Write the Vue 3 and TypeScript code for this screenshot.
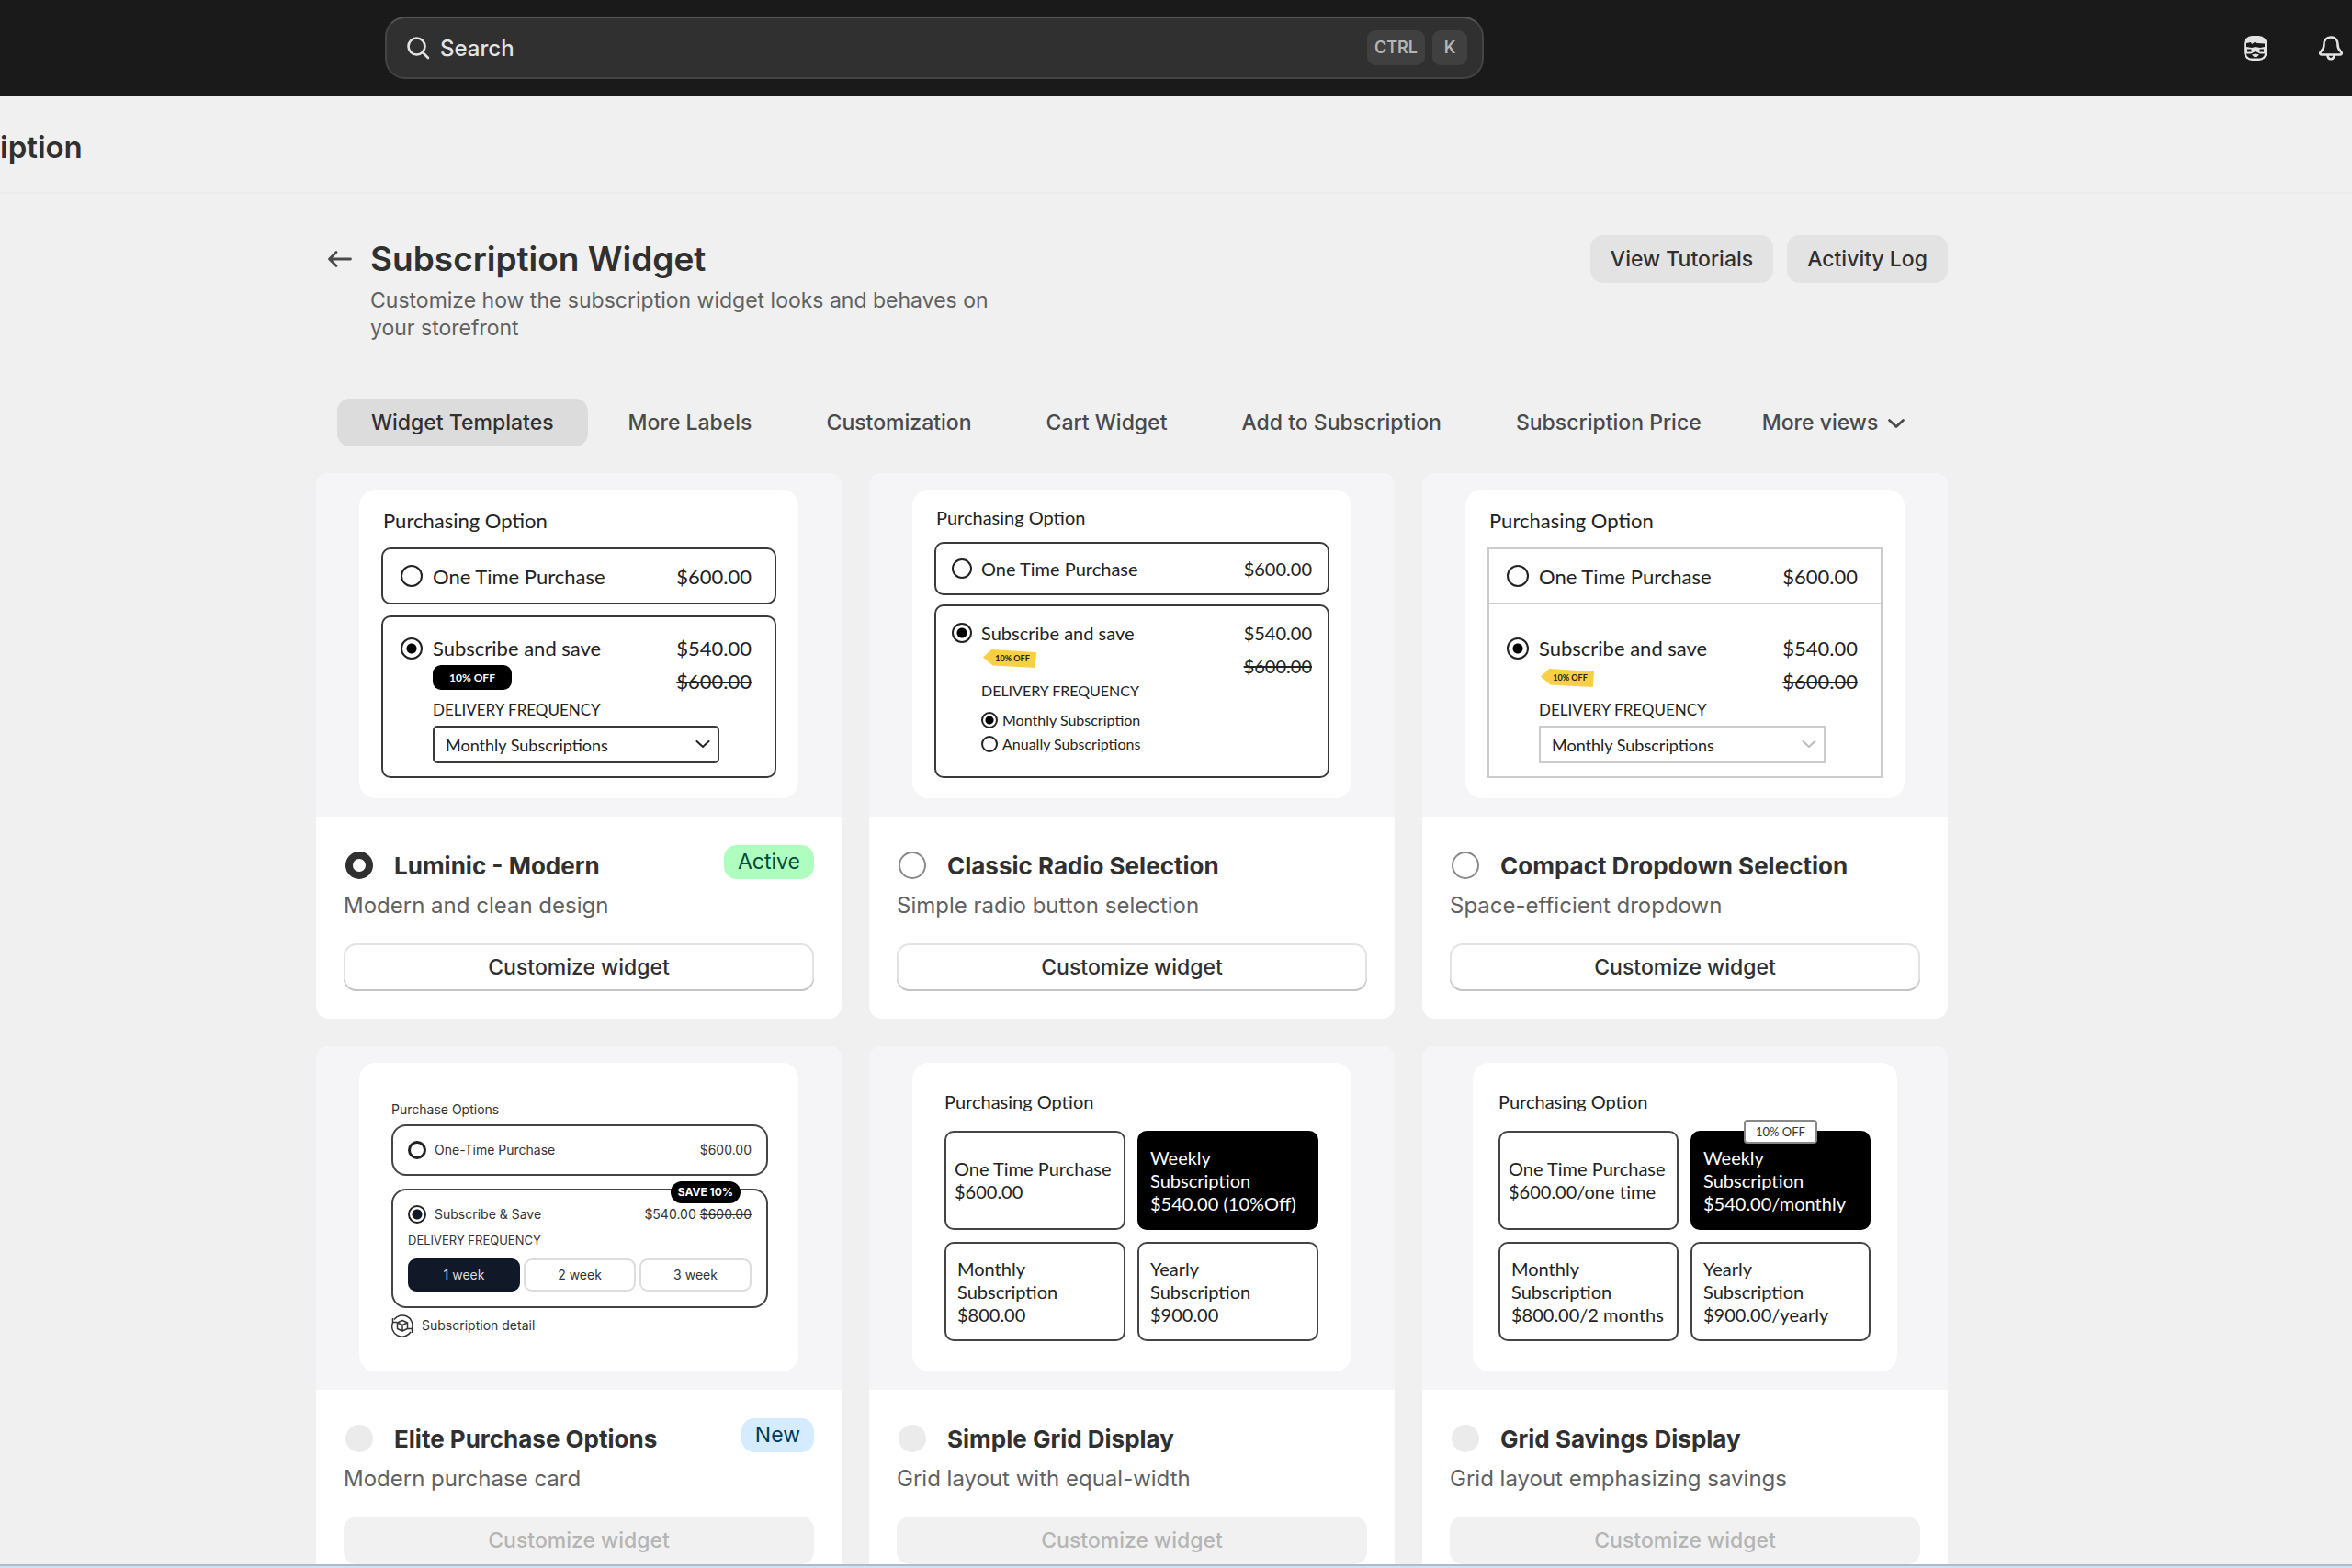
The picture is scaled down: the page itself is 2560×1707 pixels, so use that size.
<script setup lang="ts">
import { ref } from 'vue'

type PreviewKind = 'select' | 'radio' | 'elite' | 'grid'

interface PlanTile {
  lines: string[]
  active?: boolean
  flag?: string
}

interface WidgetTemplate {
  id: string
  name: string
  description: string
  preview: PreviewKind
  variant: string
  badge?: { label: string; tone: string }
  locked?: boolean
  tiles?: PlanTile[]
}

const tabs = [
  'Widget Templates',
  'More Labels',
  'Customization',
  'Cart Widget',
  'Add to Subscription',
  'Subscription Price',
]
const activeTab = ref('Widget Templates')
const selected = ref('luminic')

const templates: WidgetTemplate[] = [
  {
    id: 'luminic',
    name: 'Luminic - Modern',
    description: 'Modern and clean design',
    preview: 'select',
    variant: 'rounded',
    badge: { label: 'Active', tone: 'success' },
  },
  {
    id: 'classic',
    name: 'Classic Radio Selection',
    description: 'Simple radio button selection',
    preview: 'radio',
    variant: 'classic',
  },
  {
    id: 'compact',
    name: 'Compact Dropdown Selection',
    description: 'Space-efficient dropdown',
    preview: 'select',
    variant: 'square',
  },
  {
    id: 'elite',
    name: 'Elite Purchase Options',
    description: 'Modern purchase card',
    preview: 'elite',
    variant: 'week-picker',
    badge: { label: 'New', tone: 'info' },
    locked: true,
  },
  {
    id: 'simple-grid',
    name: 'Simple Grid Display',
    description: 'Grid layout with equal-width',
    preview: 'grid',
    variant: 'simple',
    locked: true,
    tiles: [
      { lines: ['One Time Purchase', '$600.00'] },
      { lines: ['Weekly', 'Subscription', '$540.00 (10%Off)'], active: true },
      { lines: ['Monthly', 'Subscription', '$800.00'] },
      { lines: ['Yearly', 'Subscription', '$900.00'] },
    ],
  },
  {
    id: 'grid-savings',
    name: 'Grid Savings Display',
    description: 'Grid layout emphasizing savings',
    preview: 'grid',
    variant: 'savings',
    locked: true,
    tiles: [
      { lines: ['One Time Purchase', '$600.00/one time'] },
      { lines: ['Weekly', 'Subscription', '$540.00/monthly'], active: true, flag: '10% OFF' },
      { lines: ['Monthly', 'Subscription', '$800.00/2 months'] },
      { lines: ['Yearly', 'Subscription', '$900.00/yearly'] },
    ],
  },
]

const weeks = ['1 week', '2 week', '3 week']
</script>

<template>
  <div class="shell">
    <header class="topbar">
      <label class="search">
        <svg class="search-icon" viewBox="0 0 28 28" fill="none" stroke="currentColor" stroke-width="2.600" stroke-linecap="round">
          <circle cx="12.500" cy="12.500" r="9" />
          <path d="M19 19l6 6" />
        </svg>
        <input type="text" placeholder="Search" aria-label="Search" />
        <kbd>CTRL</kbd>
        <kbd>K</kbd>
      </label>
      <div class="top-actions">
        <button type="button" class="icon-button" aria-label="Assistant">
          <svg viewBox="0 0 28 28">
            <rect x="1.200" y="1" width="25.600" height="27" rx="9" fill="#e3e3e3" />
            <path d="M4 9l5-1 1 2 3-2 3 1 8 .5v3.500l-5 1-5-1-4 1-6-1z" fill="#1a1a1a" />
            <path d="M5 15.500h4.500v3H5zM18.500 15.500H23v3h-4.500z" fill="#1a1a1a" />
            <path d="M4 20.500h5l5-2.500 5 2.500h5c-.5 3.500-3 5-6 5h-8c-3 0-5.500-1.500-6-5z" fill="#1a1a1a" />
            <path d="M10 21.500l4-1 4 1-2.500 2.500h-3z" fill="#e3e3e3" />
          </svg>
        </button>
        <button type="button" class="icon-button" aria-label="Notifications">
          <svg viewBox="0 0 28 28" fill="none" stroke="#e3e3e3" stroke-width="2.600" stroke-linejoin="round">
            <path d="M14 2.500c-5 0-7.500 3.500-7.500 8 0 4-.8 5.500-3.200 7.500-1.800 1.600-1.200 3.500.7 3.500h20c1.900 0 2.500-1.900.7-3.500-2.400-2-3.200-3.500-3.200-7.500 0-4.500-2.500-8-7.500-8z" />
            <path d="M10.500 21.500c0 3 1.300 4.700 3.500 4.700s3.500-1.700 3.500-4.700" />
          </svg>
        </button>
      </div>
    </header>

    <div class="app-title">iption</div>

    <main class="page">
      <section class="page-head">
        <a class="back" href="#" aria-label="Back">
          <svg viewBox="0 0 28 28" fill="none" stroke="#4a4a4a" stroke-width="2.800" stroke-linecap="round" stroke-linejoin="round">
            <path d="M25.500 14H3M10 6.500 2.500 14l7.500 7.500" />
          </svg>
        </a>
        <div class="heading">
          <h1>Subscription Widget</h1>
          <p>Customize how the subscription widget looks and behaves on your storefront</p>
        </div>
        <div class="head-actions">
          <button type="button">View Tutorials</button>
          <button type="button">Activity Log</button>
        </div>
      </section>

      <nav class="tabs">
        <button
          v-for="tab in tabs"
          :key="tab"
          type="button"
          :class="{ active: tab === activeTab }"
          @click="activeTab = tab"
        >
          {{ tab }}
        </button>
        <button type="button" class="more">
          More views
          <svg viewBox="0 0 20 20" fill="none" stroke="currentColor" stroke-width="2.800" stroke-linecap="round" stroke-linejoin="round">
            <path d="M2.500 7.500 10 14.500l7.500-7" />
          </svg>
        </button>
      </nav>

      <section class="cards">
        <article v-for="t in templates" :key="t.id" class="card">
          <div class="preview">
            <div class="mock" :class="[t.preview, t.variant]">
              <h3>{{ t.preview === 'elite' ? 'Purchase Options' : 'Purchasing Option' }}</h3>

              <template v-if="t.preview === 'select' || t.preview === 'radio'">
                <div class="option one-time">
                  <input :id="t.id + '-once'" type="radio" :name="t.id" />
                  <label :for="t.id + '-once'">One Time Purchase</label>
                  <span class="price">$600.00</span>
                </div>
                <div class="option subscribe">
                  <input :id="t.id + '-sub'" type="radio" :name="t.id" checked />
                  <label :for="t.id + '-sub'">Subscribe and save</label>
                  <span class="price">$540.00</span>
                  <span v-if="t.variant === 'rounded'" class="pill">10% OFF</span>
                  <span v-else class="tag">10% OFF</span>
                  <s class="old">$600.00</s>
                  <label v-if="t.preview === 'select'" class="delivery" :for="t.id + '-freq'">DELIVERY FREQUENCY</label>
                  <span v-else class="delivery">DELIVERY FREQUENCY</span>
                  <div v-if="t.preview === 'select'" class="dropdown">
                    <select :id="t.id + '-freq'">
                      <option>Monthly Subscriptions</option>
                    </select>
                    <svg viewBox="0 0 16 10" fill="none" stroke="currentColor" stroke-width="2" stroke-linecap="round">
                      <path d="M1.500 2 8 8l6.500-6" />
                    </svg>
                  </div>
                  <div v-else class="plans">
                    <label><input type="radio" :name="t.id + '-plan'" checked />Monthly Subscription</label>
                    <label><input type="radio" :name="t.id + '-plan'" />Anually Subscriptions</label>
                  </div>
                </div>
              </template>

              <template v-else-if="t.preview === 'elite'">
                <div class="option one-time">
                  <input id="elite-once" type="radio" name="elite" />
                  <label for="elite-once">One-Time Purchase</label>
                  <span class="price">$600.00</span>
                </div>
                <div class="option subscribe">
                  <span class="save">SAVE 10%</span>
                  <div class="line">
                    <input id="elite-sub" type="radio" name="elite" checked />
                    <label for="elite-sub">Subscribe &amp; Save</label>
                    <span class="price">$540.00 <s>$600.00</s></span>
                  </div>
                  <div class="delivery">DELIVERY FREQUENCY</div>
                  <div class="weeks">
                    <button v-for="(w, i) in weeks" :key="w" type="button" :class="{ on: i === 0 }">{{ w }}</button>
                  </div>
                </div>
                <div class="detail">
                  <svg viewBox="0 0 24 24" fill="none" stroke="#333" stroke-width="1.500" stroke-linejoin="round">
                    <path d="M3 5.500A11 11 0 0 1 22.500 15M21 19A11 11 0 0 1 1.500 9" />
                    <path d="M1.500 4v4.500H6M22.500 20v-4.500H18" />
                    <path d="M6.500 9 12 6.500 17.500 9v6.500L12 18l-5.500-2.500zM6.500 9l5.500 2.500L17.500 9M12 11.500V18" />
                  </svg>
                  Subscription detail
                </div>
              </template>

              <div v-else class="tiles">
                <button
                  v-for="(tile, i) in t.tiles"
                  :key="i"
                  type="button"
                  class="tile"
                  :class="{ active: tile.active, wide: tile.lines.length === 2 }"
                >
                  <span v-if="tile.flag" class="flag">{{ tile.flag }}</span>
                  <span v-for="line in tile.lines" :key="line">{{ line }}</span>
                </button>
              </div>
            </div>
          </div>

          <div class="body">
            <div class="card-head">
              <input :id="'tpl-' + t.id" v-model="selected" type="radio" name="template" :value="t.id" :disabled="t.locked" />
              <label :for="'tpl-' + t.id">{{ t.name }}</label>
              <span v-if="t.badge" class="badge" :class="t.badge.tone">{{ t.badge.label }}</span>
            </div>
            <p>{{ t.description }}</p>
            <button type="button" class="customize" :disabled="t.locked">Customize widget</button>
          </div>
        </article>
      </section>
    </main>
    <div class="edge"></div>
  </div>
</template>

<style>
body {
  background: #f0f0f0;
}
</style>

<style scoped>
* {
  box-sizing: border-box;
}

.shell {
  display: flex;
  flex-direction: column;
  height: 100vh;
  overflow: hidden;
  background: #f0f0f0;
  color: #303030;
  font-family: Inter, "Liberation Sans", sans-serif;
  font-size: 23px;
}

button,
input,
select {
  margin: 0;
  font: inherit;
  color: inherit;
}

button {
  border: 0;
  padding: 0;
  background: none;
}

h1,
h3,
p {
  margin: 0;
}

.topbar {
  flex: none;
  display: flex;
  align-items: center;
  height: 104px;
  padding: 0 9px 0 419px;
  background: #1a1a1a;
}

.search {
  display: flex;
  align-items: center;
  flex: 0 1 1196px;
  height: 68px;
  padding: 0 16px 0 20px;
  border: 2px solid #444;
  border-top-color: #555;
  border-radius: 22px;
  background: #303030;
  color: #e3e3e3;
}

.search-icon {
  width: 28px;
  height: 28px;
  margin-right: 10px;
}

.search input {
  flex: 1;
  min-width: 0;
  padding: 0;
  border: 0;
  outline: 0;
  background: none;
  font-size: 24px;
  font-weight: 500;
}

.search input::placeholder {
  color: #e3e3e3;
  opacity: 1;
}

kbd {
  height: 38px;
  margin-left: 8px;
  padding: 0 8px;
  min-width: 38px;
  border-radius: 9px;
  background: #404040;
  color: #b5b5b5;
  font: 600 18px/38px Inter, sans-serif;
  text-align: center;
}

.top-actions {
  display: flex;
  gap: 54px;
  margin-left: auto;
}

.icon-button {
  display: flex;
}

.icon-button svg {
  width: 28px;
  height: 28px;
}

.app-title {
  flex: none;
  height: 107px;
  border-bottom: 2px solid #ececec;
  font-size: 33px;
  font-weight: 600;
  line-height: 112px;
}

.page {
  flex: 1;
  min-height: 0;
  overflow: hidden;
  padding: 45px 440px 0 344px;
}

.page-head {
  display: flex;
  align-items: flex-start;
}

.back {
  display: flex;
  margin: 12px 19px 0 12px;
}

.back svg {
  width: 28px;
  height: 28px;
}

.heading {
  width: 680px;
}

.heading h1 {
  font-size: 37px;
  font-weight: 600;
  line-height: 52px;
}

.heading p {
  margin-top: 4px;
  color: #616161;
  line-height: 30px;
}

.head-actions {
  display: flex;
  gap: 15px;
  margin-left: auto;
}

.head-actions button {
  height: 52px;
  padding: 0 22px;
  border-radius: 14px;
  background: #e3e3e3;
  font-weight: 500;
}

.tabs {
  display: flex;
  gap: 7px;
  margin: 62px 0 29px 23px;
}

.tabs button {
  height: 52px;
  padding: 0 37px;
  border-radius: 14px;
  color: #4a4a4a;
  font-weight: 500;
  white-space: nowrap;
}

.tabs button.active {
  background: #dcdcdc;
  color: #303030;
}

.tabs .more {
  display: flex;
  align-items: center;
  gap: 10px;
  padding: 0 22px;
}

.more svg {
  width: 20px;
  height: 20px;
}

.cards {
  display: grid;
  grid-template-columns: repeat(3, 1fr);
  gap: 30px;
}

.card {
  overflow: hidden;
  border-radius: 14px;
  background: #fff;
}

.preview {
  display: flex;
  justify-content: center;
  align-items: flex-start;
  height: 374px;
  padding-top: 18px;
  background: #f5f5f7;
}

/* Widget previews */
.mock {
  width: 478px;
  height: 336px;
  border-radius: 18px;
  background: #fff;
  color: #222;
  font-family: Lato, "Liberation Sans", sans-serif;
}

.mock h3 {
  font-size: inherit;
  font-weight: 400;
  line-height: 28px;
}

.mock input[type="radio"] {
  appearance: none;
  flex: none;
  width: 24px;
  height: 24px;
  border: 2px solid #222;
  border-radius: 50%;
  background: #fff;
}

.mock input[type="radio"]:checked {
  background: radial-gradient(circle, #000 0 5px, #fff 6px);
}

.mock .option {
  border: 2px solid #3a3a3a;
  border-radius: 10px;
}

.mock .one-time {
  display: flex;
  align-items: center;
}

.mock .price {
  margin-left: auto;
}

.mock.select {
  padding: 20px 24px 0;
  font-size: 22px;
}

.select h3,
.radio h3 {
  padding-left: 2px;
}

.select .one-time {
  gap: 11px;
  height: 62px;
  margin-top: 15px;
  padding: 0 25px 0 19px;
}

.select .subscribe,
.radio .subscribe {
  display: grid;
  grid-template-columns: 24px 1fr auto;
  grid-template-rows: 28px 36px;
  column-gap: 11px;
  margin-top: 12px;
  padding: 20px 25px 14px 19px;
  line-height: 28px;
}

.subscribe > input {
  align-self: center;
}

.pill,
.tag {
  grid-column: 2;
  justify-self: start;
  margin-top: 4px;
}

.pill {
  height: 27px;
  padding: 0 18px;
  border-radius: 9px;
  background: #000;
  color: #fff;
  font-size: 12px;
  font-weight: 700;
  line-height: 27px;
}

.tag {
  width: 58px;
  height: 20px;
  margin-left: 2px;
  padding-left: 6px;
  background: #f9cf45;
  clip-path: polygon(0 42%, 16% 0, 100% 15%, 98% 100%, 18% 88%);
  font-size: 9px;
  font-weight: 700;
  line-height: 20px;
  text-align: center;
}

.square .tag {
  margin-top: 8px;
}

.old {
  grid-column: 3;
  align-self: end;
}

.subscribe .delivery {
  grid-column: 2 / 4;
  margin-top: 6px;
  font-size: 17px;
  line-height: 22px;
}

.dropdown {
  grid-column: 2 / 4;
  position: relative;
  width: 312px;
  margin-top: 6px;
}

.dropdown select {
  appearance: none;
  display: block;
  width: 100%;
  height: 41px;
  padding: 0 12px;
  border: 2px solid #3a3a3a;
  border-radius: 5px;
  background: #fff;
  font-size: 18px;
}

.dropdown svg {
  position: absolute;
  top: 15px;
  right: 10px;
  width: 16px;
  height: 10px;
}

.square .option {
  border-color: #ccc;
  border-radius: 0;
}

.square .subscribe {
  margin-top: 0;
  padding-top: 34px;
  border-top: 0;
}

.square .dropdown select {
  border-color: #ccc;
  border-radius: 0;
}

.square .dropdown svg {
  color: #bbb;
}

.mock.radio {
  padding: 16px 24px 0;
  font-size: 20px;
}

.radio input[type="radio"] {
  width: 22px;
  height: 22px;
}

.radio .one-time {
  gap: 10px;
  height: 58px;
  margin-top: 13px;
  padding: 0 17px;
}

.radio .subscribe {
  grid-template-columns: 22px 1fr auto;
  column-gap: 10px;
  margin-top: 10px;
  padding: 15px 17px 22px;
}

.radio .subscribe .delivery {
  margin-top: 2px;
  font-size: 16px;
}

.plans {
  grid-column: 2 / 4;
  margin-top: 8px;
}

.plans label {
  display: flex;
  align-items: center;
  gap: 5px;
  font-size: 16px;
  line-height: 26px;
}

.plans input[type="radio"] {
  width: 18px;
  height: 18px;
}

.plans input[type="radio"]:checked {
  background: radial-gradient(circle, #000 0 4px, #fff 5px);
}

.mock.elite {
  padding: 41px 33px 0 35px;
  color: #333;
  font-family: Inter, sans-serif;
  font-size: 14px;
  line-height: 20px;
}

.elite h3 {
  line-height: 20px;
}

.elite input[type="radio"] {
  width: 20px;
  height: 20px;
  border-width: 3px;
}

.elite input[type="radio"]:checked {
  border-width: 2px;
  background: radial-gradient(circle, #111827 0 5px, #fff 6px);
}

.elite .option {
  border-color: #444;
  border-radius: 16px;
}

.elite .one-time {
  gap: 9px;
  height: 56px;
  margin-top: 6px;
  padding: 0 16px;
}

.elite .subscribe {
  position: relative;
  margin-top: 14px;
  padding: 16px;
}

.elite .line {
  display: flex;
  gap: 9px;
}

.elite .save {
  position: absolute;
  top: -10px;
  right: 28px;
  padding: 0 8px;
  border-radius: 12px;
  background: #000;
  color: #fff;
  font-size: 12px;
  font-weight: 700;
  line-height: 24px;
}

.elite .subscribe .delivery {
  margin: 8px 0 10px;
  font-size: 13px;
  line-height: 20px;
}

.weeks {
  display: flex;
  gap: 4px;
}

.weeks button {
  flex: 1;
  height: 36px;
  border: 2px solid #ddd;
  border-radius: 9px;
}

.weeks .on {
  border-color: #111827;
  background: #111827;
  color: #ddd;
}

.detail {
  display: flex;
  align-items: center;
  gap: 9px;
  margin-top: 7px;
}

.detail svg {
  width: 24px;
  height: 24px;
}

.mock.grid {
  padding: 28px 36px 0 35px;
  font-size: 20px;
}

.mock.savings {
  width: 462px;
  padding: 28px 29px 0 28px;
}

.tiles {
  display: grid;
  grid-template-columns: 1fr 1fr;
  gap: 13px;
  margin-top: 18px;
}

.tile {
  position: relative;
  display: flex;
  flex-direction: column;
  justify-content: center;
  height: 108px;
  padding-left: 12px;
  border: 2px solid #444;
  border-radius: 10px;
  line-height: 25px;
  text-align: left;
  white-space: nowrap;
}

.tile.wide {
  padding-left: 9px;
}

.tile.active {
  border-color: #000;
  background: #000;
  color: #fff;
}

.flag {
  position: absolute;
  top: -14px;
  left: 56px;
  padding: 0 11px;
  border: 2px solid #888;
  border-radius: 4px;
  background: #fff;
  color: #333;
  font-size: 13px;
  line-height: 22px;
}

/* Card details */
.body {
  padding: 31px 30px 30px;
}

.card-head {
  display: flex;
  align-items: center;
  height: 44px;
}

.card-head input {
  appearance: none;
  flex: none;
  width: 30px;
  height: 30px;
  margin: 0 23px 0 2px;
  border: 2px solid #8a8a8a;
  border-radius: 50%;
  background: #fff;
}

.card-head input:checked {
  border: 8px solid #303030;
}

.card-head input:disabled {
  border: 0;
  background: #ebebeb;
}

.card-head label {
  font-size: 26px;
  font-weight: 650;
}

.badge {
  align-self: flex-start;
  height: 37px;
  margin-left: auto;
  padding: 0 15px;
  border-radius: 14px;
  line-height: 37px;
}

.badge.success {
  background: #affebf;
  color: #014b40;
}

.badge.info {
  background: #d5ebff;
  color: #003a5a;
}

.body p {
  margin: 7px 0 26px;
  color: #616161;
  font-size: 24px;
  line-height: 30px;
}

.customize {
  display: block;
  width: 100%;
  height: 52px;
  border-radius: 14px;
  background: #fff;
  box-shadow: inset 0 -2px 0 #c4c4c4, inset 0 0 0 2px #e3e3e3;
  font-weight: 550;
}

.customize:disabled {
  background: #f1f1f1;
  box-shadow: none;
  color: #b5b5b5;
}

.edge {
  flex: none;
  height: 4px;
  border-top: 2px solid #aebace;
  background: #d6e0ee;
}
</style>
